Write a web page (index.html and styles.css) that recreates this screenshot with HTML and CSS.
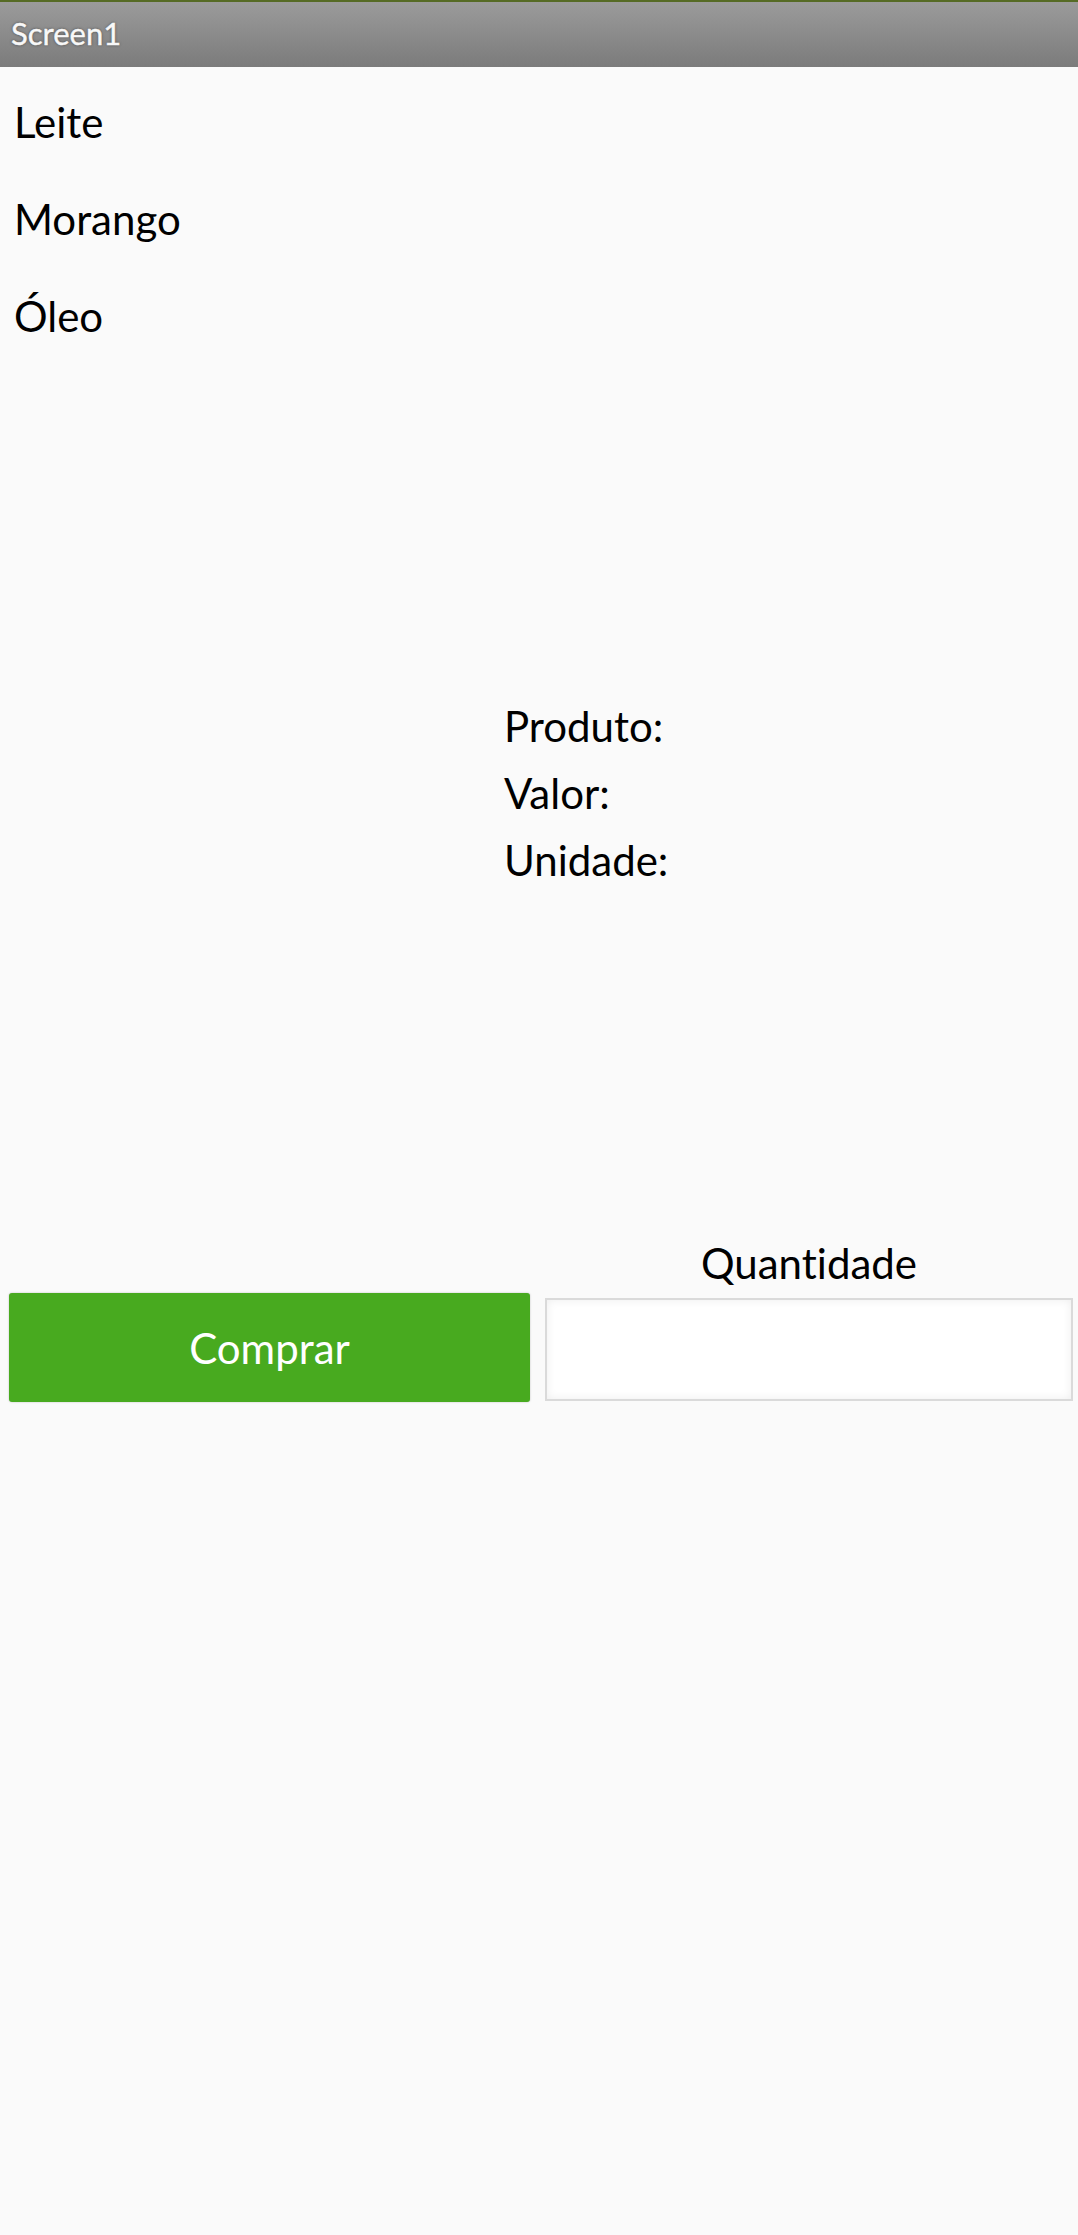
FILE: index.html
```html
<!DOCTYPE html>
<html lang="pt">
<head>
<meta charset="utf-8">
<title>Screen1</title>
<link rel="stylesheet" href="styles.css">
</head>
<body>
<header class="titlebar"><span class="title">Screen1</span></header>
<main class="screen">
  <ul class="list">
    <li class="list-item">Leite</li>
    <li class="list-item">Morango</li>
    <li class="list-item">Óleo</li>
  </ul>
  <div class="info">
    <div class="info-line">Produto:</div>
    <div class="info-line">Valor:</div>
    <div class="info-line">Unidade:</div>
  </div>
  <div class="buy-row">
    <button class="buy-button" type="button">Comprar</button>
    <div class="qty">
      <label class="qty-label" for="qty">Quantidade</label>
      <input class="qty-input" id="qty" type="text">
    </div>
  </div>
</main>
</body>
</html>
```
FILE: styles.css
```css
html, body {
  margin: 0;
  padding: 0;
  background: #fafafa;
}
body {
  font-family: Lato, "Open Sans", "Liberation Sans", sans-serif;
  font-variant-ligatures: none;
  color: #000;
  width: 1078px;
  min-height: 2235px;
}
.titlebar {
  box-sizing: border-box;
  height: 67px;
  border-top: 2px solid #566b25;
  padding: 13px 0 0 11px;
  background: linear-gradient(#9b9b9b, #7b7b7b);
}
.title {
  font-size: 31px;
  line-height: 36px;
  color: #f8f8f8;
  text-shadow: 0 0 3px rgba(0, 0, 0, 0.55);
  -webkit-text-stroke: 0.4px #f8f8f8;
}
.list {
  list-style: none;
  margin: 0;
  padding: 0;
}
.list-item {
  padding: 30px 0 17px 14px;
  font-size: 42px;
  line-height: 50px;
}
.info {
  margin-top: 335px;
  padding-left: 504px;
}
.info-line {
  font-size: 42px;
  line-height: 67px;
}
.buy-row {
  margin-top: 344px;
  display: flex;
  align-items: flex-start;
  padding: 0 5px 0 9px;
  gap: 15px;
}
.buy-button {
  margin-top: 55px;
  width: 521px;
  height: 109px;
  border: none;
  border-radius: 3px;
  background: #48aa1f;
  color: #fff;
  font-family: Lato, "Open Sans", "Liberation Sans", sans-serif;
  font-variant-ligatures: none;
  font-size: 42px;
  padding: 0;
  box-shadow: 0 0 2px rgba(0, 0, 0, 0.25);
}
.qty {
  width: 528px;
  display: flex;
  flex-direction: column;
  align-items: stretch;
}
.qty-label {
  text-align: center;
  font-size: 42px;
  line-height: 50px;
}
.qty-input {
  box-sizing: border-box;
  margin: 10px 0 0 0;
  height: 103px;
  width: 100%;
  border: 2px solid #dadada;
  background: #fff;
  box-shadow: inset 0 0 10px rgba(0, 0, 0, 0.07);
  outline: none;
}
```
